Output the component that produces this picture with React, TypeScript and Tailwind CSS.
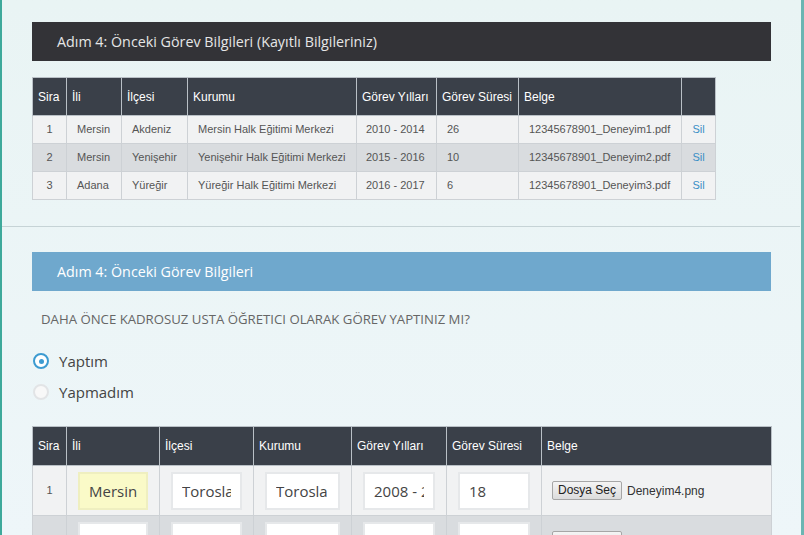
import React from "react";

const saved = [
  { no: 1, il: "Mersin", ilce: "Akdeniz", kurum: "Mersin Halk Eğitimi Merkezi", yil: "2010 - 2014", sure: "26", belge: "12345678901_Deneyim1.pdf" },
  { no: 2, il: "Mersin", ilce: "Yenişehir", kurum: "Yenişehir Halk Eğitimi Merkezi", yil: "2015 - 2016", sure: "10", belge: "12345678901_Deneyim2.pdf" },
  { no: 3, il: "Adana", ilce: "Yüreğir", kurum: "Yüreğir Halk Eğitimi Merkezi", yil: "2016 - 2017", sure: "6", belge: "12345678901_Deneyim3.pdf" },
];

const th = "border border-[#b9c0c6] px-[5px] text-left text-[12px] font-normal text-white whitespace-nowrap";
const cell = "border border-[#cdd1d5] whitespace-nowrap";
const td = cell + " px-[10px] text-[#555]";

function Field({ value, yellow }: { value: string; yellow?: boolean }) {
  return (
    <div
      className={
        "h-[38px] w-full border-2 px-[9px] text-[15px] leading-[34px] text-[#444] " +
        (yellow ? "border-[#efefc0] bg-[#fafac8]" : "border-[#e6e8ea] bg-white")
      }
      style={{ fontFamily: '"Open Sans", sans-serif' }}
    >
      <div className="overflow-hidden whitespace-nowrap">{value || "\u00a0"}</div>
    </div>
  );
}

function FileInput({ name }: { name?: string }) {
  return (
    <div className="flex items-center gap-[5px]">
      <button className="h-[19px] rounded-[2px] border border-[#a6a6a6] bg-gradient-to-b from-[#f4f4f4] to-[#dcdcdc] px-[5px] text-[12px] leading-[17px] text-[#222]">
        Dosya Seç
      </button>
      {name && <span className="text-[12px] text-[#333]">{name}</span>}
    </div>
  );
}

export default function App() {
  return (
    <div
      className="h-[535px] w-[804px] overflow-hidden border-l-2 border-r-[3px] border-l-[#3ea99b] border-r-[#6bb5b2] bg-gradient-to-b from-[#e9f4f4] to-[#eef6f9]"
      style={{ fontFamily: '"Liberation Sans", Arial, sans-serif' }}
    >
      <section className="px-[30px] pt-[22px] pb-[26px]">
        <div
          className="flex h-[39px] items-center bg-[#333337] pl-[25px] text-[14.3px] text-[#e6e6e6]"
          style={{ fontFamily: '"Open Sans", sans-serif' }}
        >
          Adım 4: Önceki Görev Bilgileri (Kayıtlı Bilgileriniz)
        </div>

        <table className="mt-[16px] w-[683px] table-fixed border-collapse text-[11px]">
          <colgroup>
            <col className="w-[34px]" />
            <col className="w-[55px]" />
            <col className="w-[66px]" />
            <col className="w-[169px]" />
            <col className="w-[80px]" />
            <col className="w-[82px]" />
            <col className="w-[163px]" />
            <col className="w-[34px]" />
          </colgroup>
          <thead>
            <tr className="h-[38px] bg-[#3a4049]">
              <th className={th}>Sira</th>
              <th className={th}>İli</th>
              <th className={th}>İlçesi</th>
              <th className={th}>Kurumu</th>
              <th className={th}>Görev Yılları</th>
              <th className={th}>Görev Süresi</th>
              <th className={th}>Belge</th>
              <th className={th}></th>
            </tr>
          </thead>
          <tbody>
            {saved.map((r) => (
              <tr key={r.no} className={"h-[28px] " + (r.no === 2 ? "bg-[#d9dcdf]" : "bg-[#f1f2f3]")}>
                <td className={cell + " text-center text-[#555]"}>{r.no}</td>
                <td className={td}>{r.il}</td>
                <td className={td}>{r.ilce}</td>
                <td className={td}>{r.kurum}</td>
                <td className={cell + " px-[9px] text-[#555]"}>{r.yil}</td>
                <td className={td}>{r.sure}</td>
                <td className={td}>{r.belge}</td>
                <td className={cell + " text-center text-[#3a8fc6]"}>Sil</td>
              </tr>
            ))}
          </tbody>
        </table>
      </section>

      <div className="mr-[1px] h-px bg-[#c6d3d6]" />

      <section className="px-[30px] pt-[25px]">
        <div
          className="flex h-[39px] items-center bg-[#6fa8cd] pl-[25px] text-[14.3px] text-white"
          style={{ fontFamily: '"Open Sans", sans-serif' }}
        >
          Adım 4: Önceki Görev Bilgileri
        </div>

        <div style={{ fontFamily: '"Open Sans", sans-serif' }}>
          <p className="mt-[19px] pl-[9px] text-[13.2px] leading-[18px] text-[#666]">
            DAHA ÖNCE KADROSUZ USTA ÖĞRETICI OLARAK GÖREV YAPTINIZ MI?
          </p>

          <div className="mt-[22px] flex flex-col gap-[9px]">
            <label className="flex h-[22px] items-center gap-[10px] pl-[1px] text-[15px] text-[#444]">
              <span className="flex h-[16px] w-[16px] items-center justify-center rounded-full border-2 border-[#3d9bd1] bg-white">
                <span className="h-[5px] w-[5px] rounded-full bg-[#3d9bd1]" />
              </span>
              Yaptım
            </label>
            <label className="flex h-[22px] items-center gap-[10px] pl-[1px] text-[15px] text-[#444]">
              <span className="h-[16px] w-[16px] rounded-full border-2 border-[#e2e4e6] bg-[#f8f8f8]" />
              Yapmadım
            </label>
          </div>
        </div>

        <table className="mt-[23px] w-[739px] table-fixed border-collapse text-[12px]">
          <colgroup>
            <col className="w-[34px]" />
            <col className="w-[93px]" />
            <col className="w-[94px]" />
            <col className="w-[98px]" />
            <col className="w-[95px]" />
            <col className="w-[95px]" />
            <col className="w-[230px]" />
          </colgroup>
          <thead>
            <tr className="h-[39px] bg-[#3a4049]">
              <th className={th}>Sira</th>
              <th className={th}>İli</th>
              <th className={th}>İlçesi</th>
              <th className={th}>Kurumu</th>
              <th className={th}>Görev Yılları</th>
              <th className={th}>Görev Süresi</th>
              <th className={th}>Belge</th>
            </tr>
          </thead>
          <tbody>
            <tr className="h-[50px] bg-[#f1f2f3]">
              <td className={cell + " text-center text-[11px] text-[#555]"}>1</td>
              <td className={cell + " px-[11px]"}><Field value="Mersin" yellow /></td>
              <td className={cell + " px-[11px]"}><Field value="Toroslar" /></td>
              <td className={cell + " px-[11px]"}><Field value="Torosla" /></td>
              <td className={cell + " px-[11px]"}><Field value="2008 - 2010" /></td>
              <td className={cell + " px-[11px]"}><Field value="18" /></td>
              <td className={cell + " px-[10px]"}><FileInput name="Deneyim4.png" /></td>
            </tr>
            <tr className="h-[50px] bg-[#d9dcdf]">
              <td className={cell + " text-center text-[11px] text-[#555]"}>2</td>
              <td className={cell + " px-[11px]"}><Field value="" /></td>
              <td className={cell + " px-[11px]"}><Field value="" /></td>
              <td className={cell + " px-[11px]"}><Field value="" /></td>
              <td className={cell + " px-[11px]"}><Field value="" /></td>
              <td className={cell + " px-[11px]"}><Field value="" /></td>
              <td className={cell + " px-[10px]"}><FileInput /></td>
            </tr>
          </tbody>
        </table>
      </section>
    </div>
  );
}
